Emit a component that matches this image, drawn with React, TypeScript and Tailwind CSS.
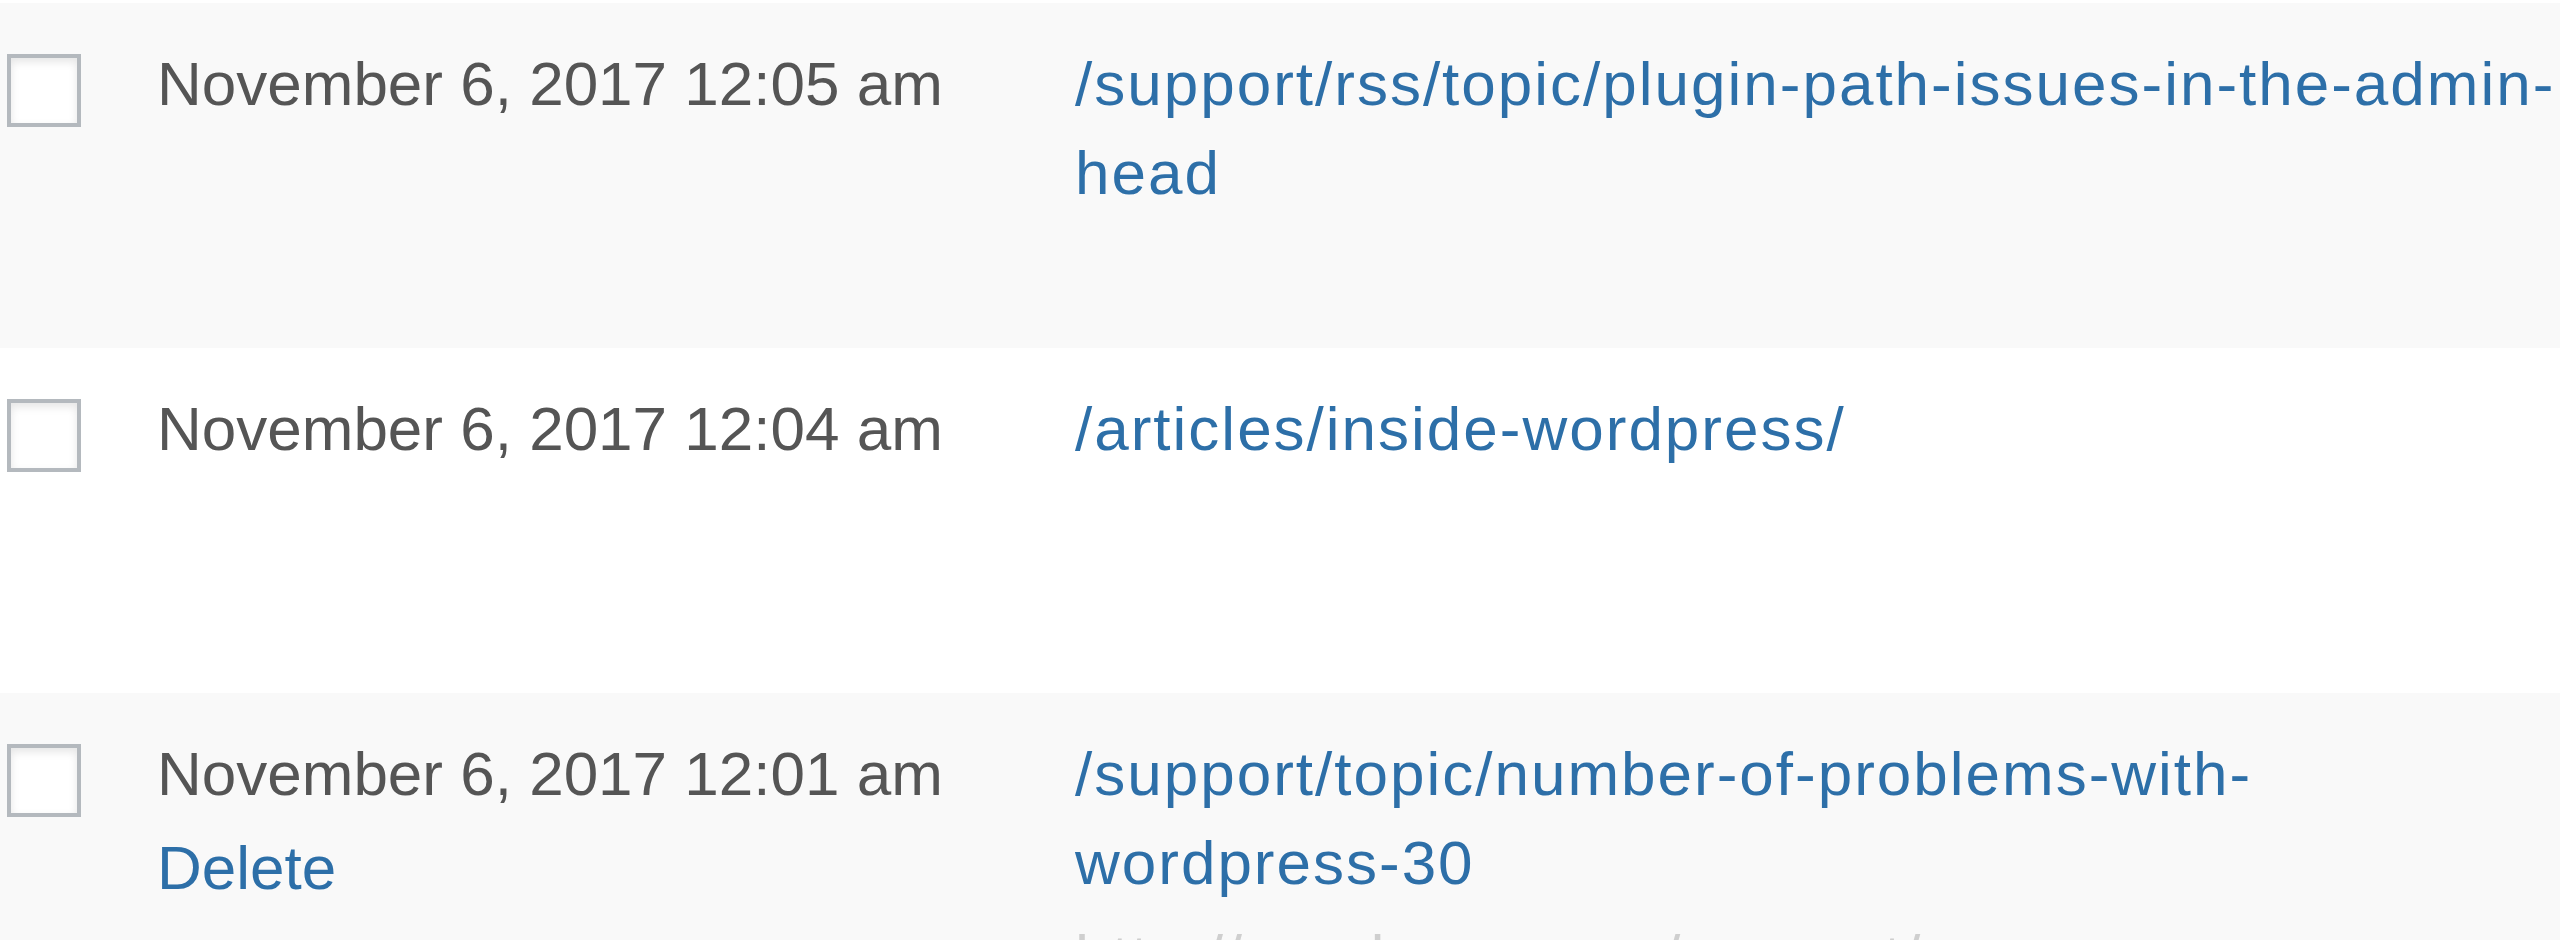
import React from "react";

type LogRow = {
  date: string;
  url: string;
  shaded: boolean;
  showActions?: boolean;
  referrer?: string;
};

const rows: LogRow[] = [
  { date: "November 6, 2017 12:05 am", url: "/support/rss/topic/plugin-path-issues-in-the-admin-head", shaded: true },
  { date: "November 6, 2017 12:04 am", url: "/articles/inside-wordpress/", shaded: false },
  {
    date: "November 6, 2017 12:01 am",
    url: "/support/topic/number-of-problems-with-wordpress-30",
    shaded: true,
    showActions: true,
    referrer: "http://wordpress.org/support/",
  },
];

const Checkbox: React.FC = () => (
  <div className="w-[74px] h-[73px] border-[4px] border-[#b4b9be] bg-white shadow-[inset_0_4px_9px_rgba(0,0,0,0.1)]" />
);

const Row: React.FC<{ row: LogRow }> = ({ row }) => (
  <div className={`flex h-[345px] shrink-0 ${row.shaded ? "bg-[#f9f9f9]" : "bg-white"}`}>
    {/* checkbox column */}
    <div className="w-[157px] shrink-0 pl-[7px] pt-[51px]">
      <Checkbox />
    </div>

    {/* date column */}
    <div className="w-[918px] shrink-0 pt-[36px]">
      <div className="text-[#555] whitespace-nowrap">{row.date}</div>
      {row.showActions && (
        <div className="mt-[5px]">
          <a className="text-[#2d6fa8]">Delete</a>
        </div>
      )}
    </div>

    {/* url column */}
    <div className="w-[1490px] shrink-0 pt-[36px] tracking-[2px]">
      <a className="text-[#2d6fa8]">{row.url}</a>
      {row.referrer && <div className="mt-[5px] text-[#cfcfcf] whitespace-nowrap">{row.referrer}</div>}
    </div>
  </div>
);

export default function App() {
  return (
    <div
      className="w-[2560px] h-[940px] overflow-hidden bg-white pt-[3px] text-[62px] leading-[89px] flex flex-col"
      style={{ fontFamily: '"Liberation Sans", Arial, sans-serif' }}
    >
      {rows.map((row) => (
        <Row key={row.date} row={row} />
      ))}
    </div>
  );
}
